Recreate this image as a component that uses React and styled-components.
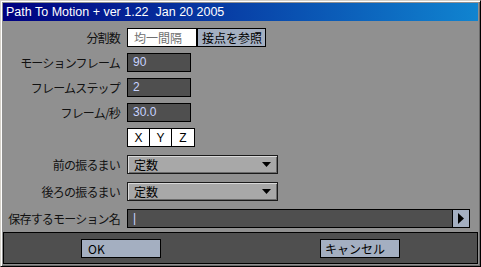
import React from 'react';
import styled, { createGlobalStyle } from 'styled-components';

const Global = createGlobalStyle`
    html, body { margin: 0; padding: 0; background: #909090; }
    body { width: 481px; height: 267px; overflow: hidden; }
`;

const Window = styled.div`
    box-sizing: border-box;
    width: 481px;
    height: 267px;
    display: flex;
    flex-direction: column;
    background: #909090;
    border-top: 1px solid #d4d0c8;
    border-left: 1px solid #d4d0c8;
    border-right: 1px solid #000;
    border-bottom: 1px solid #000;
    box-shadow: inset 1px 1px 0 #ffffff, inset -1px -1px 0 #6a6a6a;
    padding: 2px;
    font-family: "Noto Sans CJK JP", "Liberation Sans", sans-serif;
    font-size: 12px;
`;

const TitleBar = styled.div`
    height: 18px;
    flex: none;
    display: flex;
    align-items: center;
    padding-left: 3px;
    background: linear-gradient(to right, #000080, #1084d0);
    color: #fff;
    font-family: "Liberation Sans", sans-serif;
    font-size: 12.5px;
    white-space: pre;
`;

const Form = styled.div`
    flex: 1;
    display: flex;
    flex-direction: column;
    padding-top: 7px;
`;

const Row = styled.div`
    display: grid;
    grid-template-columns: 117px auto;
    column-gap: 7px;
    align-items: center;
    height: 19px;
    margin-top: ${p => p.$mt || 0}px;
`;

const Label = styled.div`
    text-align: right;
    color: #111;
    font-size: 12px;
    letter-spacing: -0.8px;
    line-height: 19px;
    white-space: nowrap;
`;

const Controls = styled.div`
    display: flex;
    align-items: stretch;
    height: 19px;
`;

const WhiteBox = styled.div`
    box-sizing: border-box;
    width: ${p => p.$w}px;
    height: 19px;
    background: #fff;
    border: 1px solid #000;
    color: #707070;
    padding-left: 6px;
    line-height: 17px;
    font-size: 12px;
`;

const DarkField = styled.div`
    box-sizing: border-box;
    width: ${p => p.$w}px;
    height: 19px;
    background: #4f4f4f;
    border: 1px solid #000;
    color: #c8d4ff;
    padding-left: 5px;
    line-height: 17px;
    font-family: "Liberation Sans", sans-serif;
    font-size: 12px;
`;

const Button = styled.div`
    box-sizing: border-box;
    width: ${p => p.$w}px;
    height: 19px;
    background: #a4afc1;
    border: 1px solid #000;
    color: #000;
    padding-left: ${p => p.$pl ?? 4}px;
    margin-left: ${p => p.$ml || 0}px;
    line-height: 17px;
    font-size: 12px;
    white-space: nowrap;
    display: flex;
    align-items: center;
    justify-content: ${p => (p.$center ? 'center' : 'flex-start')};
`;

const AxisButton = styled.div`
    box-sizing: border-box;
    width: ${p => p.$w}px;
    height: 19px;
    background: #fff;
    border: 1px solid #000;
    display: flex;
    align-items: center;
    justify-content: center;
    font-family: "Liberation Sans", sans-serif;
    font-size: 12px;
    margin-left: ${p => p.$ml || 0}px;
`;

const Dropdown = styled.div`
    box-sizing: border-box;
    width: 151px;
    height: 19px;
    background: #a8a8a8;
    border: 1px solid #1a1a1a;
    box-shadow: inset 1px 1px 0 #d8d8d8, inset -1px -1px 0 #6a6a6a;
    display: flex;
    align-items: center;
    justify-content: space-between;
    padding: 0 6px;
    color: #000;
    font-size: 12px;
`;

const Footer = styled.div`
    box-sizing: border-box;
    height: 32px;
    flex: none;
    background: #4f4f4f;
    border: 1px solid #000;
    display: flex;
    align-items: center;
    padding-left: 77px;
    gap: 159px;
`;

const Down = () => (
    <svg width="9" height="5" viewBox="0 0 9 5"><path d="M0 0h9L4.5 5z" fill="#000" /></svg>
);

const Right = () => (
    <svg width="6" height="11" viewBox="0 0 6 11"><path d="M0 0l6 5.5L0 11z" fill="#000" /></svg>
);

export default function App() {
    return (
        <Window>
            <Global />
            <TitleBar>{'Path To Motion + ver 1.22  Jan 20 2005'}</TitleBar>
            <Form>
                <Row>
                    <Label>分割数</Label>
                    <Controls>
                        <WhiteBox $w={70}>均一間隔</WhiteBox>
                        <Button $w={69}>接点を参照</Button>
                    </Controls>
                </Row>
                <Row $mt={6}>
                    <Label>モーションフレーム</Label>
                    <Controls><DarkField $w={64}>90</DarkField></Controls>
                </Row>
                <Row $mt={6}>
                    <Label>フレームステップ</Label>
                    <Controls><DarkField $w={64}>2</DarkField></Controls>
                </Row>
                <Row $mt={6}>
                    <Label>フレーム/秒</Label>
                    <Controls><DarkField $w={64}>30.0</DarkField></Controls>
                </Row>
                <Row $mt={6}>
                    <Label />
                    <Controls>
                        <AxisButton $w={23}>X</AxisButton>
                        <AxisButton $w={23} $ml={-1}>Y</AxisButton>
                        <AxisButton $w={24} $ml={-1}>Z</AxisButton>
                    </Controls>
                </Row>
                <Row $mt={8}>
                    <Label>前の振るまい</Label>
                    <Controls><Dropdown>定数<Down /></Dropdown></Controls>
                </Row>
                <Row $mt={8}>
                    <Label>後ろの振るまい</Label>
                    <Controls><Dropdown>定数<Down /></Dropdown></Controls>
                </Row>
                <Row $mt={8}>
                    <Label>保存するモーション名</Label>
                    <Controls>
                        <DarkField $w={326}>|</DarkField>
                        <Button $w={18} $pl={0} $ml={-1} $center><Right /></Button>
                    </Controls>
                </Row>
            </Form>
            <Footer>
                <Button $w={80} $pl={6}>OK</Button>
                <Button $w={80} $pl={4}>キャンセル</Button>
            </Footer>
        </Window>
    );
}
